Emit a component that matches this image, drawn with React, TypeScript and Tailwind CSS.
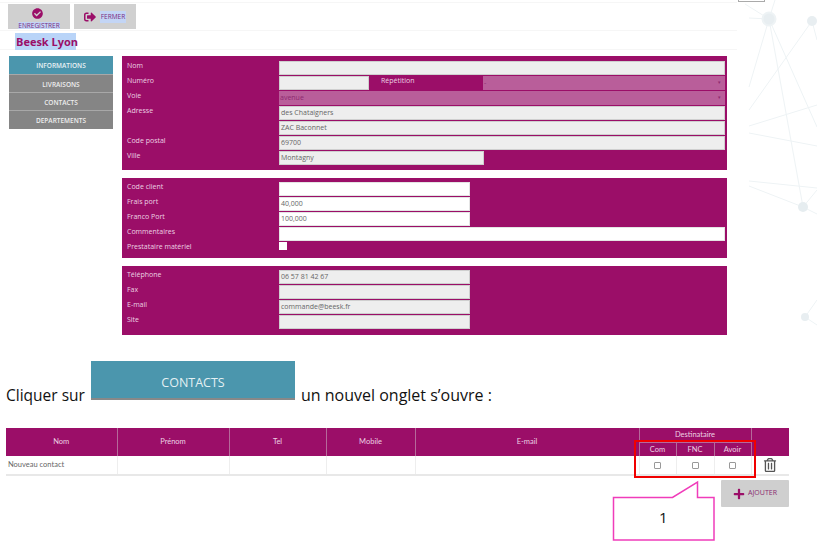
import { FaCheckCircle, FaPlus, FaRegTrashAlt, FaSignOutAlt } from "react-icons/fa";

const MENU = ["INFORMATIONS", "LIVRAISONS", "CONTACTS", "DEPARTEMENTS"];

const label = "w-[157px] shrink-0 pl-[5px] text-[7px] leading-[10px] text-[#ecd2e3]";
const grey = "h-[14px] border border-[#cfcfcf] bg-[#eeeeee] pl-[1px] text-[7px] leading-[12px] text-[#666]";
const white = "h-[14px] border border-[#e4e4e4] bg-white pl-[1px] text-[7px] leading-[12px] text-[#666]";
const select = "flex h-[14px] items-center justify-between bg-[#b95e9a] pl-[1px] text-[7px] text-[#8e2a70]";

function Row({ name, children }: { name: string; children?: React.ReactNode }) {
  return (
    <div className="flex h-[15px]">
      <div className={label}>{name}</div>
      {children}
    </div>
  );
}

function Network() {
  const lines = [
    [769, 19, 749, 87],
    [769, 19, 803, 207],
    [769, 19, 817, 127],
    [812, 21, 749, 110],
    [749, 126, 817, 105],
    [749, 133, 817, 146],
    [749, 181, 817, 188],
    [749, 186, 803, 207],
    [803, 207, 817, 214],
    [803, 207, 817, 190],
    [805, 317, 817, 300],
    [805, 317, 817, 325],
    [769, 19, 749, 18],
    [769, 19, 775, 0],
    [745, 4, 769, 19],
    [812, 21, 817, 40],
  ];
  return (
    <svg className="absolute left-0 top-0" width="817" height="340">
      {lines.map((l, i) => (
        <line key={i} x1={l[0]} y1={l[1]} x2={l[2]} y2={l[3]} stroke="#eef3f5" strokeWidth="1" />
      ))}
      <circle cx="769" cy="19" r="6.5" fill="#e8eef1" stroke="#eef3f5" strokeWidth="2" />
      <circle cx="812" cy="21" r="5" fill="#e8eef1" />
      <circle cx="803" cy="207" r="5" fill="#e6edf0" />
      <circle cx="805" cy="317" r="4" fill="#e8eef1" />
    </svg>
  );
}

export default function App() {
  return (
    <div className="relative h-[543px] w-[817px] overflow-hidden bg-white font-['Open_Sans',sans-serif]">
      <Network />
      <div className="absolute left-0 top-0 h-[3px] w-[6px] border-b border-r border-[#aaa]" />
      <div className="absolute left-[738px] top-0 h-[2px] w-[27px] border-b border-x border-[#aaa]" />

      {/* Fiche */}
      <div className="relative h-[340px] w-[737px] bg-white">
        <div className="h-[3px] border-b border-[#f6f6f6]" />
        <div className="flex h-[28px] gap-[4px] border-b border-[#f6f6f6] pl-[8px] pt-[1px]">
          <div className="flex h-[25px] w-[62px] flex-col items-center bg-[#d0d0d0] pt-[4px]">
            <FaCheckCircle className="mr-[4px] text-[11px] text-[#9b0e68]" />
            <span className="mt-[3px] bg-[#c3d5f5] text-[6.5px] leading-[7px] text-[#7a2a80]">ENREGISTRER</span>
          </div>
          <div className="flex h-[25px] w-[62px] items-center justify-center gap-[4px] bg-[#d0d0d0]">
            <FaSignOutAlt className="text-[12px] text-[#9b0e68]" />
            <span className="bg-[#c3d5f5] px-[1px] text-[6.5px] leading-[12px] text-[#7a2a80]">FERMER</span>
          </div>
        </div>

        <div className="h-[19px] border-b border-[#f6f6f6] pl-[15px] pt-[2px]">
          <div className="h-[17px] w-[61px] whitespace-nowrap bg-[#b9d4f8] pl-[1px] text-[11px] font-bold leading-[17px] text-[#9b0e68]">
            Beesk Lyon
          </div>
        </div>

        <div className="mt-[6px] flex">
          <div className="ml-[9px] flex h-[73px] w-[104px] flex-col">
            {MENU.map((m, i) => (
              <div
                key={m}
                className={
                  i === 0
                    ? "flex h-[18px] items-center justify-center bg-[#4b96ad] pt-[1px] text-[6.5px] font-semibold text-[#e8f2f5]"
                    : "flex h-[18px] items-center justify-center border-t border-[#a8a8a8] bg-[#858585] pt-[2px] text-[6.5px] font-semibold text-[#eeeeee]"
                }
              >
                {m}
              </div>
            ))}
            <div className="h-px bg-[#858585]" />
          </div>

          <div className="ml-[9px] flex w-[605px] flex-col gap-[8px]">
            <div className="h-[114px] bg-[#9b0e68] pt-[5px]">
              <Row name="Nom">
                <div className={`w-[446px] ${grey}`} />
              </Row>
              <Row name="Numéro">
                <div className={`w-[90px] ${grey}`} />
                <div className="w-[114px] pl-[12px] text-[7px] leading-[10px] text-[#ecd2e3]">Répétition</div>
                <div className={`w-[242px] ${select}`}>
                  <span>-</span>
                  <span className="w-[12px] text-center text-[5px] text-[#8e2a70]">▾</span>
                </div>
              </Row>
              <Row name="Voie">
                <div className={`w-[446px] ${select}`}>
                  <span>avenue</span>
                  <span className="w-[12px] text-center text-[5px] text-[#8e2a70]">▾</span>
                </div>
              </Row>
              <Row name="Adresse">
                <div className={`w-[446px] ${grey}`}>des Chataigners</div>
              </Row>
              <Row name="">
                <div className={`w-[446px] ${grey}`}>ZAC Baconnet</div>
              </Row>
              <Row name="Code postal">
                <div className={`w-[446px] ${grey}`}>69700</div>
              </Row>
              <Row name="Ville">
                <div className={`w-[205px] ${grey}`}>Montagny</div>
              </Row>
            </div>

            <div className="h-[80px] bg-[#9b0e68] pt-[4px]">
              <Row name="Code client">
                <div className={`w-[191px] ${white}`} />
              </Row>
              <Row name="Frais port">
                <div className={`w-[191px] ${white}`}>40,000</div>
              </Row>
              <Row name="Franco Port">
                <div className={`w-[191px] ${white}`}>100,000</div>
              </Row>
              <Row name="Commentaires">
                <div className={`w-[446px] ${white}`} />
              </Row>
              <Row name="Prestataire matériel">
                <div className="h-[8px] w-[8px] bg-white" />
              </Row>
            </div>

            <div className="h-[69px] bg-[#9b0e68] pt-[4px]">
              <Row name="Téléphone">
                <div className={`w-[191px] ${grey}`}>06 57 81 42 67</div>
              </Row>
              <Row name="Fax">
                <div className={`w-[191px] ${grey}`} />
              </Row>
              <Row name="E-mail">
                <div className={`w-[191px] ${grey}`}>commande@beesk.fr</div>
              </Row>
              <Row name="Site">
                <div className={`w-[191px] ${grey}`} />
              </Row>
            </div>
          </div>
        </div>
      </div>

      {/* Phrase */}
      <div className="mt-[21px] flex h-[39px] items-end pl-[6px] leading-[20px] text-[#111]">
        <span className="-mb-[5px] w-[85px] whitespace-nowrap text-[15.5px]">Cliquer sur</span>
        <div className="flex h-[39px] w-[204px] items-center justify-center border-b-2 border-[#888] bg-[#4b96ad] pt-[6px] text-[12.5px] text-[#e4f0f3]">
          CONTACTS
        </div>
        <span className="-mb-[5px] ml-[6px] text-[16px]">un nouvel onglet s’ouvre :</span>
      </div>

      {/* Contacts */}
      <table className="ml-[6px] mt-[28px] w-[783px] table-fixed border-collapse font-['Lato',sans-serif] text-[7.5px]">
        <colgroup>
          <col className="w-[111px]" />
          <col className="w-[112px]" />
          <col className="w-[97px]" />
          <col className="w-[89px]" />
          <col className="w-[224px]" />
          <col className="w-[37px]" />
          <col className="w-[38px]" />
          <col className="w-[37px]" />
          <col className="w-[38px]" />
        </colgroup>
        <thead className="bg-[#9b0e68] text-[#ecd2e3]">
          <tr className="h-[14px]">
            {["Nom", "Prénom", "Tel", "Mobile", "E-mail"].map((h) => (
              <th key={h} rowSpan={2} className="border-r border-[#b56a9a] font-normal">
                {h}
              </th>
            ))}
            <th colSpan={3} className="border-x border-[#b56a9a] font-normal">
              Destinataire
            </th>
            <th rowSpan={2} className="font-normal" />
          </tr>
          <tr className="h-[14px]">
            {["Com", "FNC", "Avoir"].map((h) => (
              <th key={h} className="border-x border-t border-[#b56a9a] font-normal">
                {h}
              </th>
            ))}
          </tr>
        </thead>
        <tbody>
          <tr className="h-[19px] border-b-2 border-[#e8e8e8] text-[#666]">
            <td className="border-r border-[#eeeeee] pl-[2px]">Nouveau contact</td>
            <td className="border-r border-[#eeeeee]" />
            <td className="border-r border-[#eeeeee]" />
            <td className="border-r border-[#eeeeee]" />
            <td className="border-r border-[#eeeeee]" />
            {[0, 1, 2].map((i) => (
              <td key={i} className="border-r border-[#eeeeee]">
                <div className="mx-auto h-[7px] w-[7px] rounded-[1px] border border-[#999]" />
              </td>
            ))}
            <td>
              <FaRegTrashAlt className="mx-auto text-[14px] text-[#555]" />
            </td>
          </tr>
        </tbody>
      </table>

      <div className="ml-[721px] mt-[4px] flex h-[27px] w-[68px] items-center justify-center gap-[3px] rounded-[1px] bg-[#cfcfcf] text-[7px] text-[#8a2a70]">
        <FaPlus className="text-[12px] text-[#9b0e68]" />
        <span>AJOUTER</span>
      </div>

      {/* Annotations */}
      <div className="absolute left-[634px] top-[440px] h-[38px] w-[122px] border-2 border-[#f00000]" />
      <svg className="absolute left-[610px] top-[478px]" width="110" height="66">
        <path
          d="M3.5 19.5 H 62.5 L 87.5 4 V 19.5 H 104 V 62 H 3.5 Z"
          fill="white"
          stroke="#f03cba"
          strokeWidth="1.5"
        />
      </svg>
      <div className="absolute left-[659px] top-[507px] text-[15px] leading-[20px] text-[#111]">1</div>
    </div>
  );
}
